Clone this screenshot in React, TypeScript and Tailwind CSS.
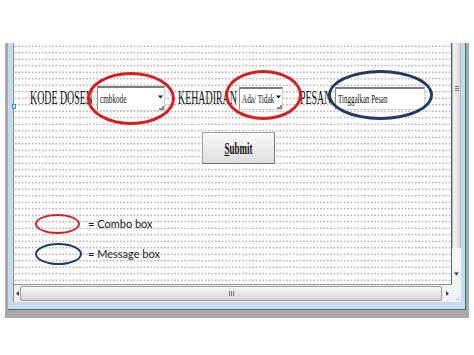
import React from 'react';

// dotted design grid of the form canvas
const dotted =
  'bg-[radial-gradient(circle,#a2a2a2_0.6px,transparent_1.1px)] bg-[length:3.4px_6.5px]';

const Label: React.FC<{ text: string; width: string }> = ({ text, width }) => (
  <div className={`${width} h-full flex items-center overflow-visible shrink-0`}>
    <span className="inline-block origin-left scale-x-[0.55] whitespace-nowrap font-['Liberation_Serif',serif] text-[18px] leading-none text-[#111]">
      {text}
    </span>
  </div>
);

const ComboBox: React.FC<{ text: string; width: string; height: string }> = ({ text, width, height }) => (
  <div
    className={`${width} ${height} shrink-0 flex bg-white border border-t-2 border-t-[#7d7d7d] border-l-[#8e8e8e] border-r-[#cfcfcf] border-b-[#d6d6d6]`}
  >
    <div className="flex-1 flex items-center pl-[2px] overflow-hidden">
      <span className="inline-block origin-left scale-x-[0.6] whitespace-nowrap font-['Liberation_Serif',serif] text-[12px] leading-none text-[#111]">
        {text}
      </span>
    </div>
    <div className="w-[7px] flex flex-col items-center justify-between">
      <div className="flex-1 flex items-center">
        <svg width="5" height="4" viewBox="0 0 5 4">
          <path d="M0 0.5 H5 L2.5 3.5 Z" fill="#111" />
        </svg>
      </div>
      <div className="w-[5px] h-[4px] border-r-2 border-b-2 border-[#8a8a8a] self-end" />
    </div>
  </div>
);

const TextBox: React.FC<{ text: string }> = ({ text }) => (
  <div className="w-[90px] h-[23px] shrink-0 flex items-center pl-[2px] bg-white border border-t-2 border-t-[#7d7d7d] border-l-[#8e8e8e] border-r-[#d2d2d2] border-b-[#d6d6d6] overflow-hidden">
    <span className="inline-block origin-left scale-x-[0.58] whitespace-nowrap font-['Liberation_Serif',serif] text-[12px] leading-none text-[#111]">
      {text}
    </span>
  </div>
);

const VerticalScroll: React.FC = () => (
  <div className="h-[242px] w-[9px] flex flex-col bg-[#ececec]">
    <div className="h-[205px] bg-[linear-gradient(90deg,#f7f7f7,#d9d9d9)] border-x border-[#b4b4b4] flex flex-col items-center pt-[43px]">
      <div className="flex flex-col gap-[1px]">
        <div className="w-[4px] h-[1px] bg-[#6f6f6f]" />
        <div className="w-[4px] h-[1px] bg-[#6f6f6f]" />
        <div className="w-[4px] h-[1px] bg-[#6f6f6f]" />
      </div>
    </div>
    <div className="flex-1 bg-[#f6f6f6]" />
    <div className="h-[16px] flex items-start justify-center pt-[3px] bg-[#f2f2f2]">
      <svg width="5" height="4" viewBox="0 0 5 4">
        <path d="M0 0.5 H5 L2.5 3.5 Z" fill="#333" />
      </svg>
    </div>
  </div>
);

const HorizontalScroll: React.FC = () => (
  <div className="h-[17px] w-[439px] flex items-center bg-[#f0f0f0] border-l border-[#8b8b8b]">
    <div className="w-[6px] flex justify-center">
      <svg width="3" height="5" viewBox="0 0 3 5">
        <path d="M3 0 V5 L0 2.5 Z" fill="#444" />
      </svg>
    </div>
    <div className="w-[422px] h-[15px] rounded-[2px] border border-[#9c9c9c] bg-[linear-gradient(180deg,#fafafa,#e4e4e4_55%,#d2d2d2)] flex items-center justify-center">
      <div className="flex gap-[1px]">
        <div className="w-[1px] h-[5px] bg-[#777]" />
        <div className="w-[1px] h-[5px] bg-[#777]" />
        <div className="w-[1px] h-[5px] bg-[#777]" />
      </div>
    </div>
    <div className="flex-1 flex justify-center">
      <svg width="3" height="5" viewBox="0 0 3 5">
        <path d="M0 0 V5 L3 2.5 Z" fill="#444" />
      </svg>
    </div>
  </div>
);

export default function App() {
  return (
    <div className="w-[474px] h-[355px] bg-white pt-[43px] pl-[5px]">
      <div className="w-[464px] h-[275px] bg-[#a8a8a8] px-[3px] pb-[8px]">
        <div className="w-full h-full bg-[#c6dbf1] pl-[5px] pr-[4px] pb-[7px] border-r border-b border-[#3d6f78]">
          <div className="grid grid-cols-[439px_9px] grid-rows-[242px_17px]">
            {/* form canvas */}
            <div className={`relative h-[242px] bg-white ${dotted} border-l border-r border-b border-l-[#8b8b8b] border-r-[#46707a] border-b-[#8f9a9e]`}>
              <div className="flex h-[24px] mt-[43px] pl-[16px] items-center">
                <Label text="KODE DOSEN" width="w-[62px]" />
                <div className="ml-[5px]">
                  <ComboBox text="cmbkode" width="w-[68px]" height="h-[25px]" />
                </div>
                <div className="ml-[13px] h-full">
                  <Label text="KEHADIRAN" width="w-[59px]" />
                </div>
                <div className="ml-[2px]">
                  <ComboBox text="Ada/ Tidak" width="w-[44px]" height="h-[23px]" />
                </div>
                <div className="ml-[17px] h-full">
                  <Label text="PESAN" width="w-[33px]" />
                </div>
                <div className="ml-[2px]">
                  <TextBox text="Tinggalkan Pesan" />
                </div>
              </div>

              <button className="mt-[22px] ml-[188px] w-[73px] h-[32px] flex items-center justify-center border border-[#a3a3a3] border-b-[#6f6f6f] border-r-[#7a7a7a] bg-[linear-gradient(180deg,#f8f8f8,#ececec_50%,#dedede)]">
                <span className="inline-block scale-x-[0.53] whitespace-nowrap font-['Liberation_Serif',serif] font-bold text-[17px] leading-none text-[#111]">
                  <span className="underline">S</span>ubmit
                </span>
              </button>

              <div className="mt-[50px] pl-[21px] flex flex-col gap-[9px] font-['Lato','Liberation_Sans',sans-serif] text-[11px] text-[#1a1a1a]">
                <div className="flex items-center h-[20px]">
                  <div className="w-[45px] h-[20px] rounded-[50%] border-[2.5px] border-[#d31f1f]" />
                  <span className="ml-[8px]">= Combo box</span>
                </div>
                <div className="flex items-center h-[22px]">
                  <div className="w-[47px] h-[22px] rounded-[50%] border-[2.5px] border-[#1f3a68]" />
                  <span className="ml-[6px]">= Message box</span>
                </div>
              </div>

              {/* annotation ellipses */}
              <div className="absolute left-[73px] top-[29px] w-[88px] h-[53px] rounded-[50%] border-[3px] border-[#d31f1f]" />
              <div className="absolute left-[211px] top-[27px] w-[77px] h-[50px] rounded-[50%] border-[3px] border-[#d31f1f]" />
              <div className="absolute left-[314px] top-[27px] w-[105px] h-[50px] rounded-[50%] border-[3px] border-[#1f3a68]" />

              {/* selection handle */}
              <div className="absolute -left-[2px] top-[61px] w-[4px] h-[5px] border border-[#4f86c6] bg-[#dbe8f7]" />
            </div>

            <VerticalScroll />
            <HorizontalScroll />
            <div className="h-[17px] bg-[#eef3f8] flex items-end justify-end p-[2px]">
              <div className="w-[3px] h-[3px] border-r border-b border-[#b8c4cf]" />
            </div>
          </div>
        </div>
      </div>
    </div>
  );
}
